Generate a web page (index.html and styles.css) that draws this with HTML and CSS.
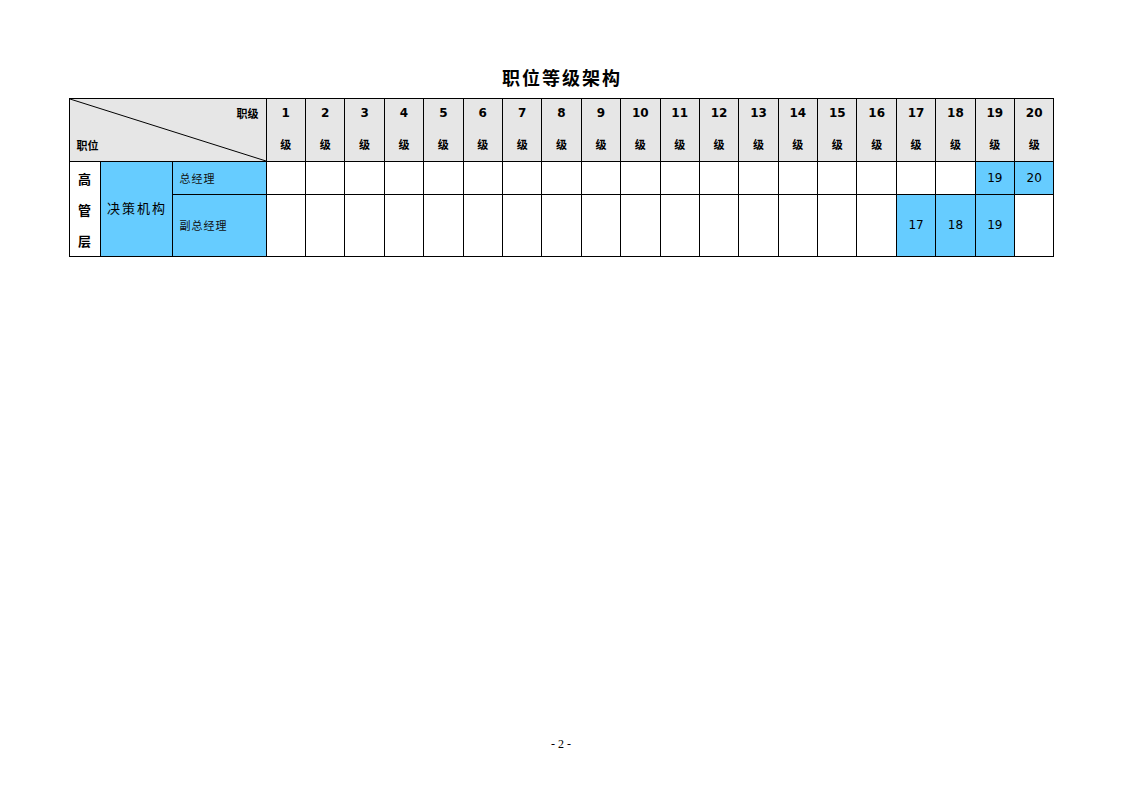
FILE: index.html
```html
<!DOCTYPE html>
<html lang="zh">
<head>
<meta charset="utf-8">
<link rel="stylesheet" href="styles.css">
</head>
<body>
<div class="page">
  <h1 class="title">职位等级架构</h1>
  <table class="grid">
    <colgroup>
      <col class="c1"><col class="c2"><col class="c3">
      <col class="g"><col class="g"><col class="g"><col class="g"><col class="g">
      <col class="g"><col class="g"><col class="g"><col class="g"><col class="g">
      <col class="g"><col class="g"><col class="g"><col class="g"><col class="g">
      <col class="g"><col class="g"><col class="g"><col class="g"><col class="g">
    </colgroup>
    <tr class="head">
      <th colspan="3" class="corner">
        <svg class="diag" viewBox="0 0 100 100" preserveAspectRatio="none"><line x1="0" y1="0" x2="100" y2="100" stroke="#000" stroke-width="1" vector-effect="non-scaling-stroke"/></svg>
        <div class="corner-in">
          <span class="lv">职级</span>
          <span class="pos">职位</span>
        </div>
      </th>
      <th><span class="n">1</span><span class="j">级</span></th>
      <th><span class="n">2</span><span class="j">级</span></th>
      <th><span class="n">3</span><span class="j">级</span></th>
      <th><span class="n">4</span><span class="j">级</span></th>
      <th><span class="n">5</span><span class="j">级</span></th>
      <th><span class="n">6</span><span class="j">级</span></th>
      <th><span class="n">7</span><span class="j">级</span></th>
      <th><span class="n">8</span><span class="j">级</span></th>
      <th><span class="n">9</span><span class="j">级</span></th>
      <th><span class="n">10</span><span class="j">级</span></th>
      <th><span class="n">11</span><span class="j">级</span></th>
      <th><span class="n">12</span><span class="j">级</span></th>
      <th><span class="n">13</span><span class="j">级</span></th>
      <th><span class="n">14</span><span class="j">级</span></th>
      <th><span class="n">15</span><span class="j">级</span></th>
      <th><span class="n">16</span><span class="j">级</span></th>
      <th><span class="n">17</span><span class="j">级</span></th>
      <th><span class="n">18</span><span class="j">级</span></th>
      <th><span class="n">19</span><span class="j">级</span></th>
      <th><span class="n">20</span><span class="j">级</span></th>
    </tr>
    <tr class="r1">
      <td rowspan="2" class="tier"><span>高</span><span>管</span><span>层</span></td>
      <td rowspan="2" class="blue dept">决策机构</td>
      <td class="blue role">总经理</td>
      <td></td><td></td><td></td><td></td><td></td>
      <td></td><td></td><td></td><td></td><td></td>
      <td></td><td></td><td></td><td></td><td></td>
      <td></td><td></td><td></td>
      <td class="blue num">19</td>
      <td class="blue num">20</td>
    </tr>
    <tr class="r2">
      <td class="blue role">副总经理</td>
      <td></td><td></td><td></td><td></td><td></td>
      <td></td><td></td><td></td><td></td><td></td>
      <td></td><td></td><td></td><td></td><td></td>
      <td></td>
      <td class="blue num">17</td>
      <td class="blue num">18</td>
      <td class="blue num">19</td>
      <td></td>
    </tr>
  </table>
  <div class="pageno">- 2 -</div>
</div>
</body>
</html>
```

FILE: styles.css
```css
html, body {
  margin: 0;
  padding: 0;
  background: #fff;
}
.page {
  width: 1122px;
  height: 793px;
  position: relative;
  display: flex;
  flex-direction: column;
  align-items: center;
  font-family: "Noto Sans CJK SC", "Liberation Sans", sans-serif;
  color: #000;
}
.title {
  margin: 64px 0 0 0;
  height: 34px;
  font-size: 18px;
  line-height: 26px;
  font-weight: bold;
  font-family: "Noto Sans CJK SC", sans-serif;
  letter-spacing: 2px;
  padding-left: 2px;
}
.grid {
  border-collapse: collapse;
  table-layout: fixed;
  width: 985px;
  margin-left: 1px;
}
.c1 { width: 31px; }
.c2 { width: 72px; }
.c3 { width: 94px; }
.g { width: 39.4px; }
.grid th, .grid td {
  border: 1px solid #000;
  padding: 0;
  text-align: center;
  vertical-align: middle;
}
.head th {
  background: #e6e6e6;
  height: 62px;
}
.head th .n {
  display: block;
  font-family: "DejaVu Sans", "Liberation Sans", sans-serif;
  font-weight: bold;
  font-size: 12px;
  line-height: 14px;
  margin-top: -3px;
}
.head th .j {
  display: block;
  font-family: "Noto Sans CJK SC", sans-serif;
  font-weight: bold;
  font-size: 11px;
  line-height: 14px;
  margin-top: 17px;
}
.corner {
  position: relative;
}
.diag {
  position: absolute;
  left: 0;
  top: 0;
  width: 100%;
  height: 100%;
}
.corner-in {
  display: flex;
  flex-direction: column;
  height: 62px;
  font-family: "Noto Sans CJK SC", sans-serif;
  font-weight: bold;
  font-size: 11px;
  line-height: 14px;
}
.corner-in .lv {
  align-self: flex-end;
  margin: 7px 7px 0 0;
}
.corner-in .pos {
  align-self: flex-start;
  margin: 18px 0 0 7px;
}
.r1 td { height: 31px; }
.r2 td { height: 60px; }
.blue { background: #66ccff; }
.grid td.tier {
  font-family: "Noto Sans CJK SC", sans-serif;
  font-weight: bold;
  font-size: 13px;
  vertical-align: top;
  padding-top: 1px;
}
.tier span {
  display: block;
  line-height: 31px;
}
.dept {
  font-size: 13px;
  letter-spacing: 2px;
}
.grid td.dept {
  vertical-align: top;
  padding-top: 36px;
  padding-left: 2px;
}
.grid td.role {
  text-align: left;
  padding-left: 7px;
  font-size: 11px;
  letter-spacing: 1px;
  color: #111;
}
.num {
  font-family: "DejaVu Sans", "Liberation Sans", sans-serif;
  font-size: 12px;
}
.pageno {
  position: absolute;
  top: 737px;
  left: 0;
  width: 1122px;
  text-align: center;
  font-family: "Liberation Serif", serif;
  font-size: 12px;
}
```
